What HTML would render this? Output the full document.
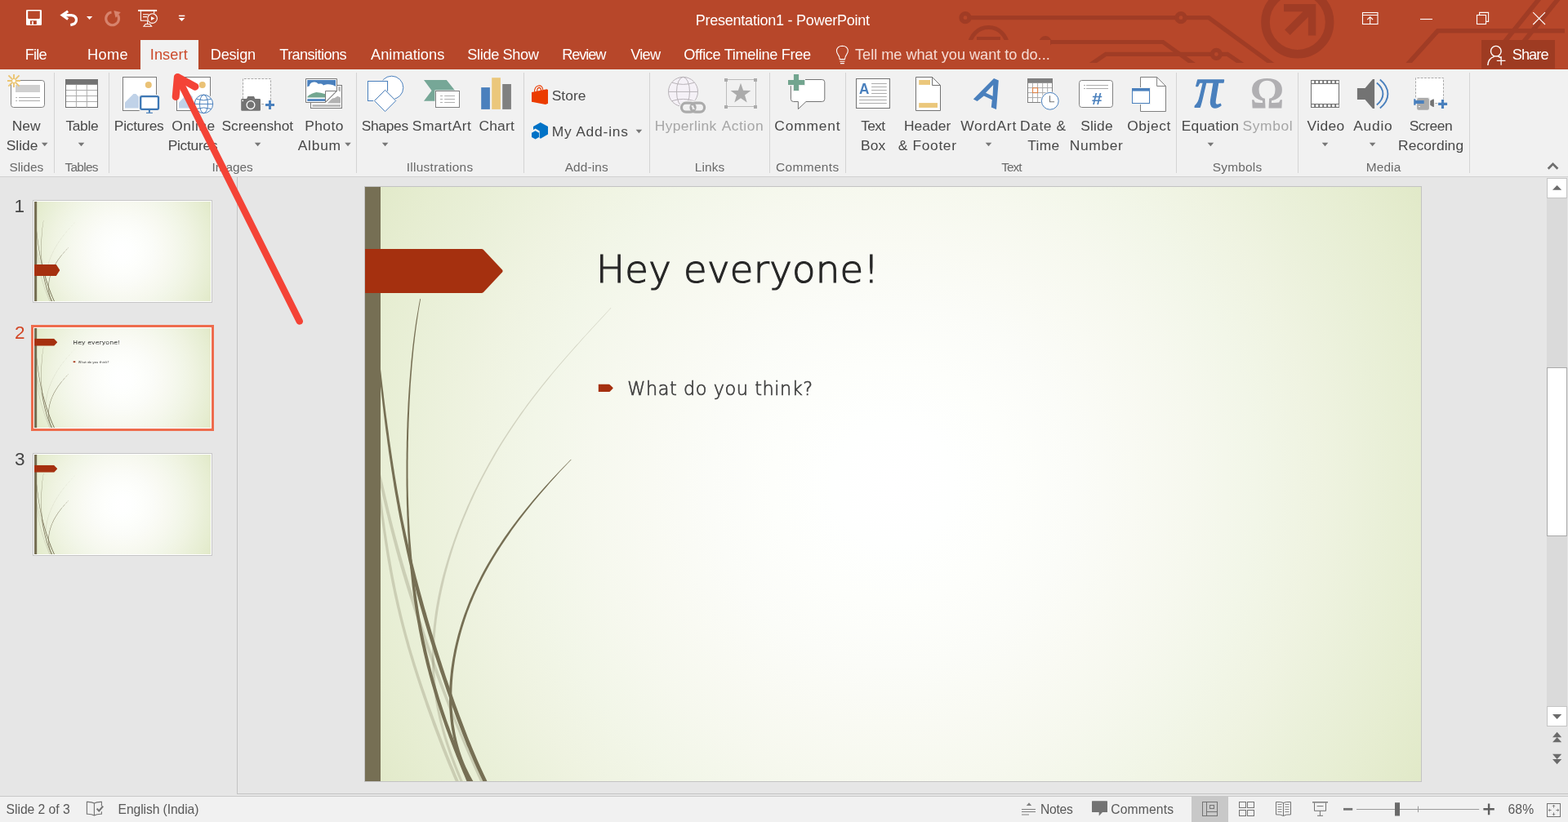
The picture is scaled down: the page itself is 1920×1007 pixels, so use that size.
<!DOCTYPE html>
<html lang="en">
<head>
<meta charset="utf-8">
<title>Presentation1 - PowerPoint</title>
<style>
*{box-sizing:border-box}
html,body{margin:0;padding:0}
body{width:1920px;height:1007px;overflow:hidden;background:#e6e6e6;font-family:"Liberation Sans",sans-serif}
#app{will-change:transform;position:relative;width:1920px;height:1007px;overflow:hidden;background:#e6e6e6}
.t{position:absolute;white-space:pre;line-height:1}
.a{position:absolute}
svg{position:absolute;overflow:visible}
#titlebar{left:0;top:0;width:1920px;height:85px;background:#b7472a;overflow:hidden}
#tab-insert{left:172px;top:49px;width:71px;height:36px;background:#f1f1f1}
#share{left:1814px;top:49px;width:90px;height:35px;background:#9e3b22}
#ribbon{left:0;top:85px;width:1920px;height:132px;background:#f1f1f1;border-bottom:1px solid #d2d2d2}
.sep{position:absolute;top:89px;width:1px;height:123px;background:#d4d4d4}
#thumbs{left:0;top:217px;width:290px;height:756px;background:#e6e6e6}
#split{left:290px;top:217px;width:1px;height:756px;background:#c3c3c3}
#editor{left:291px;top:217px;width:1629px;height:756px;background:#e6e6e6}
#statusbar{left:0;top:975px;width:1920px;height:32px;background:#f1f1f1;border-top:1px solid #c8c8c8}
.slidebg{background:radial-gradient(circle farthest-corner at 50% 50%,#ffffff 0%,#fefffe 10%,#fdfefb 20%,#fbfcf8 30%,#f9faf3 40%,#f6f8ee 50%,#f2f6e8 60%,#eff3e1 70%,#eaf0d9 80%,#e6edd1 90%,#e1e9c8 100%)}
#slide{left:447px;top:229px;width:1293px;height:728px;overflow:hidden;box-shadow:0 0 0 1px #c3c3c3}
.cg1{-webkit-text-stroke:1.15px #262626}
.cg2{-webkit-text-stroke:.65px #404040}
.thumb{position:absolute;overflow:hidden}
</style>
</head>
<body>
<div id="app">
<header id="titlebar" class="a">
<svg id="titlebar-art" width="1920" height="77" style="left:0;top:0;overflow:hidden" viewBox="0 0 1920 77" fill="none" stroke="#a03c25" stroke-width="5.2">
<circle cx="1182" cy="21.7" r="5"/>
<path d="M1188 21.7H1440.5M1451.5 21.7H1480L1560 80"/>
<circle cx="1446" cy="21.7" r="5"/>
<circle cx="1280" cy="51.5" r="5"/>
<path d="M1286 51.5H1424L1465 81"/>
<path d="M1334 80 1354 66.4H1483.5M1495.4 66.4H1503L1523 80"/>
<circle cx="1489.4" cy="66.4" r="5"/>
<path d="M1187.4 56.5A23 23 0 0 1 1233.4 56.5M1196 47.5h29"/>
<circle cx="1588.8" cy="27" r="39.3" stroke-width="10.6"/>
<path d="M1572 9.6h34.6V43.5M1606 10.2 1576.4 39.8" stroke-width="9.4"/>
<path d="M1721.6 81 1760.4 37.8H1916M1840.1 54 1885.9-3M1863.4 54 1909.3-3" stroke-width="5.6"/>
</svg>
<div id="tellme" class="a" style="left:1010px;top:49px;width:276px;height:36px;background:#b7472a"></div>

</header>
<nav id="tabs">
<div id="tab-insert" class="a"></div>
<div id="share" class="a"></div>
<span class="t" style="left:851.7px;top:16px;font-size:18px;letter-spacing:-0.23px;color:#ffffff">Presentation1 - PowerPoint</span>
<span class="t" style="left:30.7px;top:58px;font-size:18.2px;letter-spacing:-0.83px;color:#ffffff">File</span>
<span class="t" style="left:107px;top:58px;font-size:18.2px;letter-spacing:0.4px;color:#ffffff">Home</span>
<span class="t" style="left:183.8px;top:58px;font-size:18.2px;letter-spacing:0.08px;color:#cc4a2b">Insert</span>
<span class="t" style="left:257.8px;top:58px;font-size:18.2px;letter-spacing:-0.26px;color:#ffffff">Design</span>
<span class="t" style="left:342.3px;top:58px;font-size:18.2px;letter-spacing:-0.6px;color:#ffffff">Transitions</span>
<span class="t" style="left:454px;top:58px;font-size:18.2px;letter-spacing:0.03px;color:#ffffff">Animations</span>
<span class="t" style="left:572.3px;top:58px;font-size:18.2px;letter-spacing:-0.37px;color:#ffffff">Slide Show</span>
<span class="t" style="left:688.3px;top:58px;font-size:18.2px;letter-spacing:-1.12px;color:#ffffff">Review</span>
<span class="t" style="left:772.3px;top:58px;font-size:18.2px;letter-spacing:-0.77px;color:#ffffff">View</span>
<span class="t" style="left:837.3px;top:58px;font-size:18.2px;letter-spacing:-0.35px;color:#ffffff">Office Timeline Free</span>
<span class="t" style="left:1047px;top:58px;font-size:18.2px;letter-spacing:-0.03px;color:#f6dcd4">Tell me what you want to do...</span>
<span class="t" style="left:1851.7px;top:58px;font-size:18.2px;letter-spacing:-0.93px;color:#ffffff">Share</span>
<svg id="top-icons" width="1920" height="85" style="left:0;top:0" viewBox="0 0 1920 85" fill="none" stroke="#fff">
<!-- save -->
<g id="qat-save" stroke="none">
<path d="M33.3 12h16.4q1.3 0 1.3 1.3v16.4q0 1.3-1.3 1.3H33.3q-1.3 0-1.3-1.3V13.3q0-1.3 1.3-1.3z" fill="#fff"/>
<path d="M34.2 13.4h14.6v8.8l-.9.8H35.1l-.9-.8z" fill="#b7472a"/>
<rect x="37" y="25.3" width="7.8" height="4.5" fill="#b23c1e"/>
<rect x="38.9" y="26.2" width="2" height="3.6" fill="#fff"/>
</g>
<!-- undo -->
<g id="qat-undo">
<path d="M83.2 13.7 76.2 18.6 83.2 23.5" stroke-width="3.2" stroke-linejoin="miter"/>
<path d="M77.5 18.6H87.2q6.3.6 6.3 6 0 5-7.2 6" stroke-width="3.2"/>
<path d="M106 20h7.2L109.6 24.1z" fill="#fff" stroke="none"/>
</g>
<!-- redo (disabled) -->
<g id="qat-redo" stroke="#d7836d">
<path d="M136.5 15A7.9 7.9 0 1 0 144.3 18.6" stroke-width="3.1"/>
<path d="M139.4 12.9 147.8 15.1 141.6 21.7z" fill="#d7836d" stroke="none"/>
</g>
<!-- slideshow from beginning -->
<g id="qat-show">
<path d="M169.1 12.9h23" stroke-width="2"/>
<path d="M172.4 14v11.3h8.8M188.7 14v2.4" stroke-width="1.1"/>
<path d="M175 17.7h7M175 20.6h5" stroke-width="1.1"/>
<circle cx="186.6" cy="22.6" r="5.8" fill="#b7472a" stroke-width="1.1"/>
<path d="M185 20.3v4.7l4.5-2.4z" fill="#fff" stroke="none"/>
<path d="M180.6 26v3.6M176 32.2h9.6l-2.2-2.7h-5.2z" stroke-width="1.1"/>
</g>
<!-- customize -->
<g id="qat-custom">
<path d="M218.9 19.4h7.4" stroke-width="1.5"/>
<path d="M218.7 22h7.7l-3.85 4z" fill="#fff" stroke="none"/>
</g>
<!-- lightbulb -->
<g id="bulb" stroke-width="1.1">
<path d="M1028.3 72.6q-.2-3.2-2.2-6-2-3-1.6-5.4 1-4.8 6.9-5 5.9.2 6.9 5 .4 2.4-1.6 5.4-2 2.8-2.2 6z"/>
<path d="M1028.4 75.2h6M1029 77.6h4.8"/>
</g>
<!-- window controls -->
<g id="winctl" stroke-width="1.1">
<rect x="1668.5" y="15.5" width="18.5" height="14"/>
<path d="M1668.5 18.5h18.5M1677.7 29.4v-8.5M1674.3 24 1677.7 20.7 1681.1 24"/>
<path d="M1739 23.5h15"/>
<rect x="1808.5" y="18.5" width="11" height="11"/>
<path d="M1811.6 18.4v-3h11v11h-3"/>
<path d="M1877.2 15.2 1892 30M1892 15.2 1877.2 30"/>
</g>
<!-- share -->
<g id="share-ic" stroke-width="1.4">
<circle cx="1831.8" cy="62.7" r="6.3"/>
<path d="M1821.8 80q.4-8.6 8-10.6M1834 69q2.4.6 4 2"/>
<path d="M1832.8 74.4h10.6M1838.1 69.1v10.6" stroke-width="1.3"/>
</g>
</svg>

</nav>
<section id="ribbon" class="a"></section>
<section id="ribbon-content">
<i class="sep" style="left:66px"></i><i class="sep" style="left:133px"></i><i class="sep" style="left:436px"></i><i class="sep" style="left:641px"></i><i class="sep" style="left:795px"></i><i class="sep" style="left:942px"></i><i class="sep" style="left:1035px"></i><i class="sep" style="left:1440px"></i><i class="sep" style="left:1589px"></i><i class="sep" style="left:1799px"></i>

<svg id="ribbon-icons" width="1920" height="132" style="left:0;top:85px" viewBox="0 85 1920 132" fill="none">
<defs>
<path id="dd" d="M0 0h7.6L3.8 4.4z" fill="#777"/>
<g id="picframe">
<rect x=".5" y=".5" width="41" height="41" fill="#fff" stroke="#7a7a7a"/>
<circle cx="31.8" cy="9.9" r="4" fill="#eac276"/>
<path d="M3 38.6V31.4L13.4 21h3l3.4 3.4v14.2z" fill="#c0d2e8"/>
</g>
</defs>
<!-- New Slide -->
<g id="ic-newslide">
<rect x="13.5" y="98.5" width="41" height="33" rx="3.2" fill="#fff" stroke="#808080"/>
<rect x="19" y="104" width="30" height="9" fill="#d0d0d0"/>
<path d="M19.2 119.5h1.9m1.9 0h26M19.2 123.5h1.9m1.9 0h26" stroke="#ababab"/>
<circle cx="17" cy="99" r="4.6" fill="#f1f1f1"/>
<path d="M17 91v16M9 99h16M10.4 92.4l13.2 13.2M23.6 92.4 10.4 105.6" stroke="#ebc572" stroke-width="1.9"/>
<circle cx="17" cy="99" r="1.9" fill="#fff"/>
</g>
<!-- Table -->
<g id="ic-table">
<rect x="80.5" y="97.5" width="39" height="34" fill="#fff" stroke="#6e6e6e"/>
<rect x="80" y="97" width="40" height="6.8" fill="#737373"/>
<path d="M93.4 104v27.5M106.4 104v27.5M81 110.5h38M81 117.5h38M81 124.5h38" stroke="#acacac"/>
</g>
<!-- Pictures -->
<g id="ic-pictures">
<use href="#picframe" x="150" y="94"/>
<rect x="170" y="116" width="26" height="20" rx="2" fill="#f1f1f1"/>
<rect x="172.2" y="118.1" width="21.8" height="15.7" rx="1.6" fill="#fff" stroke="#3e78b5" stroke-width="2.3"/>
<path d="M182.9 134.6v3.2" stroke="#3e78b5" stroke-width="2"/><path d="M179 138.3h7.9" stroke="#3e78b5" stroke-width="1.1"/>
</g>
<!-- Online Pictures -->
<g id="ic-online">
<use href="#picframe" x="216" y="94"/>
<circle cx="249.5" cy="127.4" r="12.6" fill="#f1f1f1"/>
<circle cx="249.5" cy="127.4" r="11.2" fill="#fff" stroke="#4a80bd"/>
<ellipse cx="249.5" cy="127.4" rx="5" ry="11.2" stroke="#4a80bd"/>
<path d="M238.3 127.4h22.4M240.5 121.4q9 3 18 0M240.5 133.4q9-3 18 0" stroke="#4a80bd"/>
</g>
<!-- Screenshot -->
<g id="ic-screenshot">
<rect x="297" y="96" width="35" height="31.5" fill="#fff"/><path d="M297.5 121V96.5h34v26.5" stroke="#ababab" stroke-dasharray="3 1.3"/>
<path d="M296.4 121h5.6l1.4-3h7.6l1.4 3h5.4q1.2 0 1.2 1.2v12.4q0 1.2-1.2 1.2h-21.4q-1.2 0-1.2-1.2v-12.4q0-1.2 1.2-1.2z" fill="#737373"/>
<circle cx="307" cy="128.6" r="4.9" stroke="#fff" stroke-width="1.3"/>
<rect x="296.5" y="122.6" width="1.5" height="1.5" fill="#fff"/>
<path d="M320.2 127.5h2.8" stroke="#ababab"/>
<path d="M325 128.5h11M330.5 123v11" stroke="#4a80bd" stroke-width="3"/>
</g>
<!-- Photo Album -->
<g id="ic-album">
<rect x="380.5" y="104.5" width="38" height="28" fill="#fff" stroke="#7a7a7a"/>
<rect x="382.5" y="128.2" width="34.5" height="2.6" fill="#b3b3b3"/>
<path d="M400.6 126.6H417v-7l-3.6-1.8-3.6 2.2-2.8.4zM414.3 106.3H417v6.3l-2.7-1.6z" fill="#b3b3b3"/>
<path d="M374.5 96.5h38v15.2L398.6 125.5H374.5z" fill="#fff" stroke="#7a7a7a"/>
<path d="M376.3 98.1H411V106q-2-1.6-4-2-3.4-1-6.4-.7-2.6.2-4.6 1.1-1.3-2.1-3.2-2-1.6 0-3.1.4-2-2.4-4.7-2.3-2.2.2-4 1.1-2 1.4-2.25 3.9-1.4.2-2.55 1z" fill="#4a80bd"/>
<path d="M376.3 119.6v-1.2q5.6-4.6 11-5.4 5.6.6 11 2.3v4.3z" fill="#74a791"/>
<rect x="376.3" y="121.2" width="22" height="2.7" fill="#4a80bd"/>
<path d="M398.5 111.5h13.6L398.5 125.1z" fill="#fff" stroke="#7a7a7a"/>
</g>
<!-- Shapes -->
<g id="ic-shapes">
<circle cx="479.6" cy="107.4" r="14.2" fill="#fff" stroke="#4a80bd"/>
<rect x="449.3" y="98.3" width="26.4" height="26" fill="#f1f1f1"/>
<rect x="450.5" y="99.5" width="24" height="24" fill="#fff" stroke="#4a80bd"/>
<path d="M471.6 108.7 486.4 123.5 471.6 138.3 456.8 123.5z" fill="#f1f1f1"/>
<path d="M471.6 110.4 484.7 123.5 471.6 136.6 458.5 123.5z" fill="#fff" stroke="#4a80bd"/>
</g>
<!-- SmartArt -->
<g id="ic-smartart">
<path d="M519 98h27.8l10.4 13-10.4 12.7H519l9.6-12.7z" fill="#76a797"/>
<rect x="532.4" y="110.4" width="31.4" height="22" fill="#f1f1f1"/>
<rect x="533.5" y="111.5" width="29" height="20" fill="#fff" stroke="#808080"/>
<path d="M539 117.5h3m2.2 0h12.8M539 121.5h3m2.2 0h12.8M539 125.5h3m2.2 0h12.8" stroke="#b0b0b0"/>
</g>
<!-- Chart -->
<g id="ic-chart">
<rect x="589.2" y="107.1" width="10.7" height="26.8" fill="#4a80bd"/>
<rect x="602.2" y="95.2" width="10.7" height="38.7" fill="#ebc77b"/>
<rect x="615.2" y="103" width="10.7" height="30.9" fill="#808080"/>
</g>
<!-- Store -->
<g id="ic-store">
<path d="M654.6 112.6q-.3-6.4 4.8-7.6 4.6-.8 5.4 5.2M657.6 112.2q0-4.4 2.4-4.8 2.2-.2 2.6 3.6" stroke="#eb3c00" stroke-width="1.1"/>
<path d="M651 113.1 669.4 109.3 671 110V126.8L668 128 651 124.8z" fill="#eb3c00"/>
</g>
<!-- My Add-ins -->
<g id="ic-addins">
<path d="M661.8 149.9 671 155V164.6L662 169.7 660.7 169V160.4L655.6 157.5 653 159V154.9z" fill="#0072c6"/>
<path d="M655.6 160.2 660 162.7V168L655.6 170.6 651 168V162.7z" fill="#0072c6"/>
</g>
<!-- Hyperlink (disabled) -->
<g id="ic-hyperlink">
<circle cx="836.5" cy="112.4" r="18" fill="#f5f1f7" stroke="#b8b3b8"/>
<ellipse cx="836.5" cy="112.4" rx="8" ry="18" stroke="#b8b3b8"/>
<path d="M818.5 112.4h36M823 101.2q13.5 4.4 27 0M823 123.6q13.5-4.4 27 0" stroke="#b8b3b8"/>
<rect x="834.5" y="126.2" width="16.6" height="10.9" rx="5.4" fill="#f1f1f1" stroke="#f1f1f1" stroke-width="5.8"/>
<rect x="846" y="126.2" width="16.6" height="10.9" rx="5.4" fill="#f1f1f1" stroke="#f1f1f1" stroke-width="5.8"/>
<rect x="834.5" y="126.2" width="16.6" height="10.9" rx="5.4" stroke="#ababab" stroke-width="3.2"/>
<rect x="846" y="126.2" width="16.6" height="10.9" rx="5.4" stroke="#ababab" stroke-width="3.2"/>
<path d="M846.6 129.4 850.6 133.8" stroke="#f1f1f1" stroke-width="1.2"/>
</g>
<!-- Action (disabled) -->
<g id="ic-action">
<rect x="889.5" y="97.5" width="36" height="33" stroke="#bcbcbc"/>
<path d="M887 96h4v4h-4zM923 96h4v4h-4zM887 129h4v4h-4zM923 129h4v4h-4z" fill="#ababab"/>
<path d="M907 101.8 910.1 110.8 919.4 110.9 912 116.6 914.7 125.5 907 120.2 899.3 125.5 902 116.6 894.6 110.9 903.9 110.8z" fill="#ababab"/>
</g>
<!-- Comment -->
<g id="ic-comment">
<path d="M971.6 97.5h35q3.2 0 3.2 3.2v20.6q0 3.2-3.2 3.2H987L977.4 133.6V124.5h-5.8q-3.2 0-3.2-3.2V100.7q0-3.2 3.2-3.2z" fill="#fff" stroke="#737373"/>
<path d="M964 96.8h22v8.4h-22zM970.8 90h8.4v22h-8.4z" fill="#f1f1f1"/>
<path d="M965 101h20.2M975 91v20" stroke="#72a58f" stroke-width="6.2"/>
</g>
<!-- Text Box -->
<g id="ic-textbox">
<rect x="1048.5" y="96.5" width="41" height="36" fill="#fff" stroke="#737373"/>
<path d="M1067.1 102.5h18.7M1067.1 106.5h18.7M1067.1 110.5h18.7M1067.1 114.5h18.7M1052 118.5h33.8M1052 122.5h33.8M1052 126.5h33.8" stroke="#ababab"/>
<text x="1058.2" y="114.8" font-family="Liberation Sans, sans-serif" font-weight="bold" font-size="18.4" text-anchor="middle" fill="#4a80bd" textLength="12.4" lengthAdjust="spacingAndGlyphs">A</text>
</g>
<!-- Header & Footer -->
<g id="ic-header">
<path d="M1121.5 94.5h20l10 10v31h-30z" fill="#fff" stroke="#737373"/>
<path d="M1141.5 94.6v9.9h9.9" stroke="#737373"/>
<rect x="1125.2" y="98" width="13.8" height="5.9" fill="#ebc77b"/>
<rect x="1125.2" y="126.1" width="22.8" height="5.8" fill="#ebc77b"/>
</g>
<!-- WordArt -->
<g id="ic-wordart">
<path d="M1217 95.9 1222.8 98.4 1220 134.1 1213.8 131.6 1214.8 122.2 1204.8 117.6 1196.6 124 1191.8 121.6zM1216.2 104 1207 113.8 1215.6 117.8z" fill="#4a80bd" fill-rule="evenodd"/>
</g>
<!-- Date & Time -->
<g id="ic-date">
<rect x="1258.5" y="96.5" width="30" height="29" fill="#fff" stroke="#808080"/>
<rect x="1258" y="96" width="31" height="5.8" fill="#808080"/>
<path d="M1264.5 102v23M1270.6 102v23M1276.7 102v23M1282.7 102v23M1259 107.6h29M1259 113.6h29M1259 119.6h29" stroke="#ababab"/>
<rect x="1264.6" y="107.8" width="6" height="5.8" fill="#fff" stroke="#e07b39"/>
<circle cx="1285.8" cy="123.8" r="11.6" fill="#f1f1f1"/>
<circle cx="1285.8" cy="123.8" r="10.4" fill="#fff" stroke="#4a80bd"/>
<path d="M1285.5 117.2v7.5h5.6" stroke="#737373" stroke-width="1.1"/>
</g>
<!-- Slide Number -->
<g id="ic-slidenum">
<rect x="1321.5" y="98.5" width="41" height="33" rx="3.2" fill="#fff" stroke="#808080"/>
<path d="M1327 104.5h1.9m1.2 0h26.9M1327 108.5h1.9m1.2 0h26.9" stroke="#ababab"/>
<text x="1343.4" y="127.6" font-family="Liberation Sans, sans-serif" font-weight="bold" font-size="21" text-anchor="middle" fill="#4a80bd" textLength="12.6" lengthAdjust="spacingAndGlyphs">#</text>
</g>
<!-- Object -->
<g id="ic-object">
<path d="M1396.5 94.5h20.2l10.8 11v31h-31z" fill="#fff" stroke="#808080"/>
<path d="M1416.6 94.6v10.9h10.8" stroke="#808080"/>
<rect x="1385" y="107" width="24" height="21" fill="#f1f1f1"/>
<rect x="1386.5" y="108.5" width="21" height="18" fill="#fff" stroke="#4a80bd"/>
<rect x="1386" y="108" width="22" height="3.6" fill="#4a80bd"/>
</g>
<!-- Equation -->
<g id="ic-equation">
<text x="1479.9" y="131.2" font-family="Liberation Serif, serif" font-style="italic" font-size="72" text-anchor="middle" fill="#4a80bd" stroke="#4a80bd" stroke-width="1.4" stroke-linejoin="round" textLength="34.2" lengthAdjust="spacingAndGlyphs">π</text>
</g>
<!-- Symbol (disabled) -->
<g id="ic-symbol">
<text x="1551.5" y="131.8" font-family="Liberation Serif, serif" font-weight="bold" font-size="54.5" text-anchor="middle" fill="#b0afb2" textLength="41.5" lengthAdjust="spacingAndGlyphs">Ω</text>
</g>
<!-- Video -->
<g id="ic-video">
<rect x="1605.5" y="98.5" width="34" height="33" fill="#fff" stroke="#737373"/>
<path d="M1605 100.5h35M1605 129.5h35" stroke="#737373" stroke-width="5"/>
<path d="M1606.2 100.5h33M1606.2 129.5h33" stroke="#fff" stroke-width="2.8" stroke-dasharray="3 2"/>
</g>
<!-- Audio -->
<g id="ic-audio">
<path d="M1661.9 108.1h9.6l9.4-11.2h2.2v36.2h-2.2l-9.4-11.2h-9.6z" fill="#737373"/>
<path d="M1685.8 101.6q7.6 6 7.6 13.4t-7.6 13.4M1689.8 97.4q9.6 8 9.6 17.6t-9.6 17.6" stroke="#4a80bd" stroke-width="1.9"/>
</g>
<!-- Screen Recording -->
<g id="ic-screenrec">
<rect x="1733" y="95" width="35" height="31.5" fill="#fff"/><path d="M1733.5 119.5V95.5h34v26" stroke="#ababab" stroke-dasharray="3 1.3"/>
<rect x="1734" y="119" width="17" height="16.6" rx="2" fill="#f1f1f1"/>
<rect x="1735.1" y="119.9" width="14.8" height="14.8" rx="2" fill="#ababab"/>
<path d="M1731.2 121.2h2.3v1.8h10.2v4.1h-10.2v1.6h-2.3z" fill="#4a80bd"/>
<path d="M1737 130.6h2" stroke="#fff"/>
<path d="M1751.2 123.6 1754.8 121.4h1.1v9.6h-1.1l-3.6-2.2z" fill="#737373"/>
<path d="M1757.2 126.5h3" stroke="#ababab"/>
<path d="M1761.1 127.4h11M1766.5 121.9v11" stroke="#4a80bd" stroke-width="3.1"/>
</g>
<!-- dropdown arrows -->
<g id="dropdowns">
<use href="#dd" x="50.9" y="174.8"/><use href="#dd" x="95.7" y="174.8"/><use href="#dd" x="311.8" y="174.8"/><use href="#dd" x="422.2" y="174.8"/><use href="#dd" x="467.8" y="174.8"/><use href="#dd" x="778.6" y="158.8"/><use href="#dd" x="1206.7" y="174.8"/><use href="#dd" x="1478.6" y="174.8"/><use href="#dd" x="1618.7" y="174.8"/><use href="#dd" x="1676.8" y="174.8"/>
</g>
<path id="collapse" d="M1895.7 206.7 1901.55 200.8 1907.4 206.7" stroke="#6e6e6e" stroke-width="2.7"/>

</svg>

<span class="t" style="left:14.8px;top:146px;font-size:17.4px;letter-spacing:-0.05px;color:#484848">New</span>
<span class="t" style="left:7.7px;top:170px;font-size:17.4px;letter-spacing:0.02px;color:#484848">Slide</span>
<span class="t" style="left:80.5px;top:146px;font-size:17.4px;letter-spacing:-0.38px;color:#484848">Table</span>
<span class="t" style="left:139.8px;top:146px;font-size:17.4px;letter-spacing:-0.26px;color:#484848">Pictures</span>
<span class="t" style="left:210.3px;top:146px;font-size:17.4px;letter-spacing:0.54px;color:#484848">Online</span>
<span class="t" style="left:205.7px;top:170px;font-size:17.4px;letter-spacing:-0.27px;color:#484848">Pictures</span>
<span class="t" style="left:271.5px;top:146px;font-size:17.4px;letter-spacing:-0.03px;color:#484848">Screenshot</span>
<span class="t" style="left:373.2px;top:146px;font-size:17.4px;letter-spacing:0.45px;color:#484848">Photo</span>
<span class="t" style="left:364.7px;top:170px;font-size:17.4px;letter-spacing:0.78px;color:#484848">Album</span>
<span class="t" style="left:442.7px;top:146px;font-size:17.4px;letter-spacing:-0.3px;color:#484848">Shapes</span>
<span class="t" style="left:504.8px;top:146px;font-size:17.4px;letter-spacing:0.49px;color:#484848">SmartArt</span>
<span class="t" style="left:586.5px;top:146px;font-size:17.4px;letter-spacing:0.18px;color:#484848">Chart</span>
<span class="t" style="left:675.7px;top:109px;font-size:17.4px;letter-spacing:0.07px;color:#484848">Store</span>
<span class="t" style="left:675.7px;top:153px;font-size:17.4px;letter-spacing:0.81px;color:#484848">My Add-ins</span>
<span class="t" style="left:801.8px;top:146px;font-size:17.4px;letter-spacing:0.36px;color:#a6a6a6">Hyperlink</span>
<span class="t" style="left:883.7px;top:146px;font-size:17.4px;letter-spacing:0.52px;color:#a6a6a6">Action</span>
<span class="t" style="left:948.3px;top:146px;font-size:17.4px;letter-spacing:0.83px;color:#484848">Comment</span>
<span class="t" style="left:1054.2px;top:146px;font-size:17.4px;letter-spacing:-0.67px;color:#484848">Text</span>
<span class="t" style="left:1054px;top:170px;font-size:17.4px;letter-spacing:0.15px;color:#484848">Box</span>
<span class="t" style="left:1107px;top:146px;font-size:17.4px;letter-spacing:0.04px;color:#484848">Header</span>
<span class="t" style="left:1099.8px;top:170px;font-size:17.4px;letter-spacing:0.64px;color:#484848">&amp; Footer</span>
<span class="t" style="left:1176.2px;top:146px;font-size:17.4px;letter-spacing:0.77px;color:#484848">WordArt</span>
<span class="t" style="left:1249px;top:146px;font-size:17.4px;letter-spacing:0.6px;color:#484848">Date &amp;</span>
<span class="t" style="left:1258.3px;top:170px;font-size:17.4px;letter-spacing:0.3px;color:#484848">Time</span>
<span class="t" style="left:1323.2px;top:146px;font-size:17.4px;letter-spacing:0.2px;color:#484848">Slide</span>
<span class="t" style="left:1309.8px;top:170px;font-size:17.4px;letter-spacing:0.64px;color:#484848">Number</span>
<span class="t" style="left:1380.3px;top:146px;font-size:17.4px;letter-spacing:0.54px;color:#484848">Object</span>
<span class="t" style="left:1446.8px;top:146px;font-size:17.4px;letter-spacing:0.21px;color:#484848">Equation</span>
<span class="t" style="left:1521.5px;top:146px;font-size:17.4px;letter-spacing:0.64px;color:#a6a6a6">Symbol</span>
<span class="t" style="left:1600.5px;top:146px;font-size:17.4px;letter-spacing:0.38px;color:#484848">Video</span>
<span class="t" style="left:1657.2px;top:146px;font-size:17.4px;letter-spacing:0.75px;color:#484848">Audio</span>
<span class="t" style="left:1725.7px;top:146px;font-size:17.4px;letter-spacing:-0.44px;color:#484848">Screen</span>
<span class="t" style="left:1712px;top:170px;font-size:17.4px;letter-spacing:0.1px;color:#484848">Recording</span>
<span class="t" style="left:11.5px;top:197px;font-size:15.4px;letter-spacing:-0.06px;color:#696969">Slides</span>
<span class="t" style="left:79.5px;top:197px;font-size:15.4px;letter-spacing:-0.7px;color:#696969">Tables</span>
<span class="t" style="left:259.5px;top:197px;font-size:15.4px;letter-spacing:-0.06px;color:#696969">Images</span>
<span class="t" style="left:497.7px;top:197px;font-size:15.4px;letter-spacing:0.3px;color:#696969">Illustrations</span>
<span class="t" style="left:691.7px;top:197px;font-size:15.4px;letter-spacing:0.13px;color:#696969">Add-ins</span>
<span class="t" style="left:850.7px;top:197px;font-size:15.4px;letter-spacing:0.15px;color:#696969">Links</span>
<span class="t" style="left:950px;top:197px;font-size:15.4px;letter-spacing:0.39px;color:#696969">Comments</span>
<span class="t" style="left:1226.2px;top:197px;font-size:15.4px;letter-spacing:-0.97px;color:#696969">Text</span>
<span class="t" style="left:1484.8px;top:197px;font-size:15.4px;letter-spacing:0.23px;color:#696969">Symbols</span>
<span class="t" style="left:1672.8px;top:197px;font-size:15.4px;letter-spacing:0.12px;color:#696969">Media</span>
</section>
<aside id="thumbs" class="a"></aside>
<div id="split" class="a"></div>
<main id="editor" class="a"></main>
<section id="thumb-list">
<div class="thumb slidebg" id="thumb1" style="left:42px;top:247px;width:216px;height:122px;box-shadow:0 0 0 1px #fff,0 0 0 2px #c6c6c6">
<svg width="216" height="122" style="left:0;top:0" viewBox="0 0 216 122"><use href="#wisp" x="0" y="0" width="216" height="122"/><use href="#tag" x="0" y="77" width="31.4" height="14"/></svg>
</div>
<div class="a" id="thumb2-sel" style="left:38px;top:398px;width:224px;height:130px;background:#fff;border:3px solid #ee6c4d"></div>
<div class="thumb slidebg" id="thumb2" style="left:42px;top:402px;width:216px;height:122px">
<svg width="216" height="122" style="left:0;top:0" viewBox="0 0 216 122"><use href="#wisp" x="0" y="0" width="216" height="122"/><use href="#tag" x="0" y="12.8" width="28.2" height="9"/><rect x="47.7" y="40.4" width="2.6" height="1.7" fill="#a5300f"/></svg>
<div class="a" style="left:0;top:0;width:1293px;height:728px;transform:scale(.16705);transform-origin:0 0">
<span class="t cg1" style="left:283px;top:78px;font-size:46.6px;letter-spacing:0.25px;color:#262626;font-family:'DejaVu Sans', 'Liberation Sans', sans-serif;font-weight:200">Hey everyone!</span>
<span class="t cg2" style="left:321.3px;top:236px;font-size:22.4px;letter-spacing:0.55px;color:#404040;font-family:'DejaVu Sans', 'Liberation Sans', sans-serif;font-weight:200">What do you think?</span>
</div>
</div>
<div class="thumb slidebg" id="thumb3" style="left:42px;top:557px;width:216px;height:122px;box-shadow:0 0 0 1px #fff,0 0 0 2px #c6c6c6">
<svg width="216" height="122" style="left:0;top:0" viewBox="0 0 216 122"><use href="#wisp" x="0" y="0" width="216" height="122"/><use href="#tag" x="0" y="12.8" width="28.2" height="9"/></svg>
</div>
<span class="t" style="left:17.6px;top:242px;font-size:22.5px;letter-spacing:0px;color:#444444">1</span>
<span class="t" style="left:17.9px;top:397px;font-size:22.5px;letter-spacing:0px;color:#d24726">2</span>
<span class="t" style="left:17.9px;top:552px;font-size:22.5px;letter-spacing:0px;color:#444444">3</span>
</section>

<article id="slide" class="a slidebg">
<svg width="1293" height="728" style="left:0;top:0" viewBox="0 0 1293 728">
<defs>
<symbol id="wisp" viewBox="0 0 1293 728" preserveAspectRatio="none">
<g fill="#766f54" fill-opacity=".26">
<path d="M14.8 361.1L15.2 364.9L15.7 370.2L16.3 375.5L16.8 380.4L17.4 385.2L17.9 390L18.5 394.8L19.1 399.6L19.7 404.4L20.4 409.2L21 414L21.7 418.8L22.4 423.6L23.1 428.4L23.8 433.2L24.5 438L25.3 442.8L26 447.6L26.8 452.4L27.6 457.2L28.5 462L29.3 466.8L30.2 471.6L31.1 476.4L32 481.2L32.9 486L33.9 490.8L34.9 495.6L35.9 500.4L37 505.2L38 510L39.1 514.8L40.3 519.6L41.4 524.4L42.6 529.2L43.8 534L45 538.8L46.3 543.6L47.6 548.4L48.9 553.2L50.2 558L51.6 562.9L53 567.7L54.4 572.5L55.8 577.3L57.3 582.1L58.7 586.9L60.3 591.7L61.8 596.5L63.3 601.3L64.9 606.1L66.5 610.9L68.1 615.7L69.7 620.5L71.3 625.3L73 630.1L74.6 634.9L76.3 639.7L78 644.5L79.7 649.3L81.5 654.1L83.2 658.9L85 663.7L86.8 668.5L88.6 673.3L90.4 678.1L92.3 682.9L94.1 687.7L96 692.5L97.9 697.3L99.8 702.1L101.8 706.9L103.8 711.8L105.8 716.6L107.8 721.4L110.1 726.7L112.5 732L114.1 735.8L117.6 734.2L115.9 730.5L113.6 725.2L111.3 719.9L109.3 715.1L107.3 710.3L105.3 705.5L103.4 700.7L101.4 695.9L99.6 691.2L97.7 686.4L95.8 681.6L94 676.8L92.2 672L90.4 667.2L88.6 662.4L86.8 657.6L85 652.8L83.3 648L81.6 643.3L79.8 638.5L78.1 633.7L76.4 628.9L74.7 624.1L73.1 619.3L71.4 614.6L69.8 609.8L68.2 605L66.6 600.2L65.1 595.4L63.5 590.6L62 585.8L60.5 581.1L59.1 576.3L57.6 571.5L56.2 566.7L54.8 561.9L53.5 557.1L52.1 552.3L50.8 547.6L49.6 542.8L48.3 538L47.1 533.2L45.9 528.4L44.7 523.6L43.6 518.8L42.4 514.1L41.4 509.3L40.3 504.5L39.3 499.7L38.2 494.9L37.2 490.1L36.3 485.3L35.3 480.5L34.4 475.8L33.5 471L32.7 466.2L31.8 461.4L31 456.6L30.1 451.8L29.3 447L28.5 442.3L27.8 437.5L27 432.7L26.3 427.9L25.5 423.1L24.8 418.3L24.2 413.5L23.5 408.7L22.8 403.9L22.2 399.2L21.5 394.4L20.9 389.6L20.3 384.8L19.7 380L19.2 375.2L18.6 369.9L18 364.6L17.6 360.9Z"/>
<path d="M15.2 351.4L16 355.1L17.2 360.4L18.4 365.6L19.5 370.4L20.6 375.1L21.7 379.9L22.8 384.6L23.9 389.4L25 394.1L26.1 398.9L27.3 403.6L28.4 408.3L29.6 413.1L30.8 417.8L32 422.6L33.2 427.3L34.4 432.1L35.7 436.8L36.9 441.6L38.2 446.4L39.5 451.1L40.8 455.9L42.2 460.6L43.5 465.4L44.9 470.1L46.3 474.9L47.7 479.6L49.1 484.4L50.6 489.1L52 493.8L53.5 498.6L55 503.3L56.5 508.1L58 512.8L59.5 517.6L61.1 522.3L62.7 527L64.2 531.8L65.8 536.5L67.4 541.2L69 546L70.6 550.7L72.2 555.5L73.8 560.2L75.4 564.9L77.1 569.7L78.7 574.4L80.4 579.2L82 583.9L83.7 588.7L85.4 593.4L87.1 598.2L88.9 602.9L90.6 607.6L92.4 612.4L94.2 617.1L96 621.8L97.8 626.6L99.7 631.3L101.5 636L103.4 640.8L105.3 645.5L107.2 650.2L109.2 655L111.1 659.7L113.1 664.5L115.1 669.2L117.1 674L119.1 678.7L121.1 683.4L123.2 688.2L125.2 692.9L127.3 697.7L129.4 702.4L131.5 707.2L133.6 711.9L135.8 716.7L137.9 721.4L140.3 726.7L142.6 731.9L144.3 735.6L147 734.4L145.4 730.7L143 725.4L140.6 720.2L138.5 715.4L136.4 710.7L134.3 705.9L132.2 701.2L130.1 696.5L128 691.7L125.9 687L123.9 682.3L121.8 677.5L119.8 672.8L117.8 668L115.9 663.3L113.9 658.6L112 653.8L110.1 649.1L108.3 644.3L106.4 639.6L104.6 634.8L102.8 630.1L101 625.3L99.3 620.6L97.5 615.9L95.8 611.1L94.1 606.4L92.4 601.6L90.7 596.9L89 592.1L87.3 587.4L85.6 582.7L84 577.9L82.3 573.2L80.7 568.5L79 563.7L77.4 559L75.8 554.2L74.2 549.5L72.7 544.8L71.1 540L69.6 535.3L68 530.5L66.5 525.8L65 521L63.5 516.3L62 511.6L60.5 506.8L59 502.1L57.5 497.3L56.1 492.6L54.6 487.9L53.2 483.1L51.8 478.4L50.3 473.7L48.9 468.9L47.5 464.2L46.1 459.5L44.8 454.7L43.4 450L42.1 445.3L40.8 440.5L39.5 435.8L38.2 431.1L37 426.4L35.7 421.6L34.5 416.9L33.3 412.2L32.1 407.4L31 402.7L29.8 398L28.7 393.2L27.6 388.5L26.5 383.8L25.4 379L24.3 374.3L23.2 369.5L22.1 364.8L20.8 359.5L19.5 354.3L18.6 350.6Z"/>
<path d="M300.9 148L297.5 151.7L292.6 157L287.7 162.3L283.3 167.1L278.9 171.8L274.5 176.6L270.1 181.4L265.8 186.1L261.5 190.9L257.2 195.6L252.9 200.4L248.7 205.2L244.5 209.9L240.4 214.7L236.3 219.5L232.3 224.2L228.3 229L224.3 233.7L220.4 238.5L216.6 243.3L212.8 248L209.1 252.8L205.4 257.6L201.8 262.3L198.2 267.1L194.7 271.9L191.2 276.6L187.8 281.4L184.5 286.2L181.2 290.9L178 295.7L174.9 300.5L171.8 305.2L168.7 310L165.7 314.8L162.8 319.5L159.9 324.3L157.1 329.1L154.4 333.9L151.7 338.6L149 343.4L146.4 348.2L143.9 352.9L141.4 357.7L138.9 362.5L136.6 367.3L134.2 372L131.9 376.8L129.7 381.6L127.5 386.4L125.4 391.1L123.3 395.9L121.3 400.7L119.3 405.4L117.3 410.2L115.5 415L113.6 419.8L111.8 424.5L110.1 429.3L108.4 434.1L106.7 438.9L105.1 443.6L103.5 448.4L102 453.2L100.5 457.9L99.1 462.7L97.7 467.5L96.4 472.3L95.1 477L93.9 481.8L92.7 486.6L91.6 491.4L90.6 496.2L89.6 500.9L88.7 505.7L87.8 510.5L87 515.3L86.2 520.1L85.5 524.9L84.9 529.7L84.3 534.5L83.8 539.2L83.3 544L82.9 548.8L82.6 553.6L82.3 558.4L82.1 563.2L81.9 568L81.8 572.8L81.8 577.6L81.9 582.4L82 587.2L82.2 591.9L82.4 596.7L82.8 601.5L83.2 606.3L83.6 611.1L84.2 615.9L84.8 620.7L85.5 625.5L86.2 630.3L87.1 635.1L88 639.9L89 644.7L90 649.5L91.1 654.2L92.3 659L93.6 663.8L94.9 668.6L96.3 673.4L97.8 678.2L99.3 683L100.9 687.8L102.5 692.6L104.2 697.4L106 702.1L107.8 706.9L109.7 711.7L111.6 716.5L113.5 721.3L115.8 726.6L118 731.9L119.6 735.6L122.5 734.4L120.9 730.7L118.6 725.4L116.4 720.1L114.5 715.3L112.5 710.6L110.7 705.8L108.9 701.1L107.1 696.3L105.4 691.6L103.8 686.8L102.2 682.1L100.7 677.3L99.2 672.6L97.8 667.8L96.5 663L95.2 658.3L94.1 653.5L92.9 648.8L91.9 644L90.9 639.3L90 634.5L89.2 629.8L88.5 625L87.8 620.3L87.2 615.6L86.6 610.8L86.2 606.1L85.8 601.3L85.4 596.6L85.2 591.8L85 587.1L84.9 582.3L84.8 577.6L84.8 572.8L84.9 568.1L85.1 563.3L85.3 558.6L85.5 553.8L85.9 549.1L86.3 544.3L86.7 539.6L87.3 534.8L87.8 530L88.5 525.3L89.2 520.5L89.9 515.8L90.8 511L91.6 506.3L92.5 501.5L93.5 496.8L94.5 492L95.6 487.3L96.7 482.5L97.8 477.7L99 473L100.3 468.2L101.6 463.4L102.9 458.7L104.3 453.9L105.8 449.1L107.3 444.3L108.8 439.6L110.4 434.8L112.1 430L113.8 425.3L115.5 420.5L117.4 415.7L119.2 411L121.1 406.2L123.1 401.4L125.1 396.7L127.1 391.9L129.2 387.1L131.4 382.4L133.6 377.6L135.8 372.8L138.1 368L140.5 363.3L142.9 358.5L145.4 353.7L147.9 349L150.5 344.2L153.1 339.4L155.8 334.7L158.5 329.9L161.3 325.1L164.1 320.3L167 315.6L170 310.8L173 306L176.1 301.3L179.2 296.5L182.4 291.7L185.6 286.9L188.9 282.2L192.3 277.4L195.7 272.6L199.2 267.8L202.7 263.1L206.3 258.3L210 253.5L213.7 248.7L217.4 244L221.3 239.2L225.1 234.4L229 229.6L233 224.8L237 220.1L241.1 215.3L245.2 210.5L249.3 205.7L253.5 200.9L257.8 196.2L262 191.4L266.3 186.6L270.6 181.8L275 177L279.3 172.3L283.7 167.5L288.1 162.7L293 157.4L297.9 152.1L301.3 148.4Z"/>
</g>
<g fill="#766f54">
<path d="M67.3 137.1L66.6 140.8L65.6 146.1L64.7 151.4L63.9 156.1L63.1 160.8L62.3 165.6L61.6 170.3L61 175.1L60.3 179.8L59.7 184.6L59.1 189.3L58.5 194.1L58 198.8L57.5 203.5L57 208.3L56.5 213L56.1 217.8L55.7 222.5L55.3 227.3L54.9 232L54.5 236.8L54.2 241.5L53.8 246.3L53.5 251L53.2 255.8L52.9 260.5L52.6 265.3L52.4 270L52.2 274.7L51.9 279.5L51.7 284.2L51.5 289L51.4 293.7L51.2 298.5L51.1 303.2L51 308L50.8 312.7L50.8 317.5L50.7 322.2L50.6 327L50.6 331.7L50.5 336.5L50.5 341.2L50.5 346L50.5 350.7L50.5 355.5L50.5 360.2L50.5 364.9L50.6 369.7L50.7 374.4L50.7 379.2L50.8 383.9L50.9 388.7L51.1 393.4L51.2 398.2L51.4 402.9L51.6 407.7L51.8 412.4L52 417.2L52.2 421.9L52.5 426.7L52.8 431.4L53.1 436.2L53.4 440.9L53.7 445.7L54 450.5L54.4 455.2L54.8 460L55.2 464.7L55.6 469.5L56.1 474.2L56.6 479L57.1 483.7L57.6 488.5L58.2 493.3L58.8 498L59.4 502.8L60.1 507.5L60.8 512.3L61.5 517L62.2 521.8L63 526.6L63.8 531.3L64.7 536.1L65.5 540.8L66.4 545.6L67.4 550.4L68.3 555.1L69.3 559.9L70.4 564.6L71.4 569.4L72.5 574.1L73.7 578.9L74.8 583.7L76 588.4L77.3 593.2L78.5 597.9L79.8 602.7L81.1 607.4L82.5 612.2L83.9 617L85.3 621.7L86.7 626.5L88.2 631.2L89.7 636L91.3 640.8L92.8 645.5L94.4 650.3L96.1 655L97.7 659.8L99.4 664.5L101.2 669.3L102.9 674.1L104.7 678.8L106.5 683.6L108.3 688.3L110.2 693.1L112 697.8L114 702.6L115.9 707.3L117.8 712.1L119.8 716.9L121.8 721.6L124 726.9L126.3 732.2L127.9 735.8L131.8 734.2L130.3 730.5L128 725.2L125.8 719.9L123.8 715.2L121.8 710.5L119.9 705.7L117.9 701L116 696.2L114.2 691.5L112.3 686.8L110.5 682L108.6 677.3L106.9 672.6L105.1 667.9L103.4 663.1L101.7 658.4L100 653.7L98.4 648.9L96.8 644.2L95.2 639.5L93.7 634.7L92.1 630L90.6 625.3L89.2 620.5L87.8 615.8L86.4 611.1L85 606.4L83.7 601.6L82.4 596.9L81.1 592.2L79.9 587.4L78.7 582.7L77.6 578L76.4 573.2L75.3 568.5L74.3 563.8L73.2 559L72.2 554.3L71.3 549.6L70.3 544.8L69.4 540.1L68.5 535.4L67.6 530.7L66.8 525.9L66 521.2L65.2 516.5L64.5 511.7L63.7 507L63 502.3L62.4 497.5L61.7 492.8L61.1 488.1L60.5 483.3L59.9 478.6L59.4 473.9L58.8 469.1L58.3 464.4L57.8 459.7L57.3 454.9L56.9 450.2L56.5 445.5L56.1 440.7L55.7 436L55.3 431.3L55 426.5L54.7 421.8L54.5 417.1L54.2 412.3L54 407.6L53.7 402.8L53.6 398.1L53.4 393.4L53.2 388.6L53.1 383.9L52.9 379.1L52.8 374.4L52.7 369.7L52.6 364.9L52.6 360.2L52.5 355.4L52.5 350.7L52.5 346L52.5 341.2L52.5 336.5L52.6 331.7L52.6 327L52.7 322.2L52.8 317.5L52.8 312.8L53 308L53.1 303.3L53.2 298.5L53.4 293.8L53.5 289.1L53.7 284.3L53.9 279.6L54.1 274.8L54.3 270.1L54.5 265.3L54.7 260.6L55 255.9L55.3 251.1L55.5 246.4L55.8 241.6L56.2 236.9L56.5 232.2L56.9 227.4L57.3 222.7L57.6 217.9L58.1 213.2L58.5 208.4L59 203.7L59.4 199L59.9 194.2L60.5 189.5L61 184.7L61.6 180L62.2 175.2L62.8 170.5L63.5 165.8L64.2 161L64.9 156.3L65.6 151.5L66.5 146.2L67.4 141L68.1 137.3Z"/>
<path d="M14.1 196.1L14.4 199.8L14.9 205L15.4 210.3L15.9 215L16.4 219.8L16.9 224.5L17.4 229.2L17.9 234L18.4 238.7L18.9 243.4L19.5 248.2L20 252.9L20.5 257.6L21.1 262.3L21.6 267.1L22.2 271.8L22.7 276.5L23.3 281.3L23.9 286L24.5 290.7L25.1 295.5L25.7 300.2L26.4 304.9L27 309.7L27.6 314.4L28.3 319.1L28.9 323.9L29.6 328.6L30.3 333.3L31 338.1L31.7 342.8L32.4 347.5L33.2 352.3L33.9 357L34.7 361.7L35.4 366.5L36.2 371.2L37 375.9L37.9 380.7L38.7 385.4L39.6 390.1L40.4 394.9L41.3 399.6L42.2 404.4L43.1 409.1L44.1 413.8L45 418.6L46 423.3L46.9 428L47.9 432.8L49 437.5L50 442.3L51 447L52.1 451.8L53.1 456.5L54.2 461.2L55.3 466L56.5 470.7L57.6 475.5L58.8 480.2L60 485L61.2 489.7L62.4 494.4L63.6 499.2L64.9 503.9L66.2 508.7L67.5 513.4L68.8 518.1L70.2 522.9L71.5 527.6L72.9 532.3L74.3 537.1L75.7 541.8L77.1 546.5L78.6 551.3L80 556L81.5 560.7L83 565.5L84.4 570.2L85.9 574.9L87.5 579.7L89 584.4L90.5 589.1L92.1 593.9L93.7 598.6L95.3 603.3L96.9 608.1L98.5 612.8L100.1 617.5L101.8 622.3L103.4 627L105.1 631.8L106.8 636.5L108.5 641.2L110.2 646L111.9 650.7L113.7 655.4L115.5 660.2L117.3 664.9L119.1 669.7L121 674.4L122.8 679.1L124.7 683.9L126.7 688.6L128.7 693.4L130.7 698.1L132.7 702.8L134.8 707.6L136.9 712.3L139.1 717.1L141.3 721.8L143.8 727.1L146.4 732.4L148.2 736L152.4 734L150.6 730.3L148 725L145.5 719.8L143.3 715.1L141.2 710.4L139.1 705.7L137 701L135 696.3L133 691.5L131 686.8L129.1 682.1L127.2 677.4L125.3 672.7L123.5 668L121.7 663.2L119.9 658.5L118.1 653.8L116.3 649.1L114.6 644.4L112.8 639.6L111.1 634.9L109.4 630.2L107.8 625.5L106.1 620.8L104.5 616L102.8 611.3L101.2 606.6L99.6 601.9L98 597.2L96.5 592.4L94.9 587.7L93.4 583L91.8 578.3L90.3 573.5L88.8 568.8L87.3 564.1L85.9 559.4L84.4 554.7L83 549.9L81.5 545.2L80.1 540.5L78.7 535.8L77.3 531L75.9 526.3L74.6 521.6L73.2 516.9L71.9 512.2L70.6 507.4L69.3 502.7L68 498L66.7 493.3L65.4 488.6L64.2 483.9L62.9 479.2L61.7 474.4L60.5 469.7L59.3 465L58.1 460.3L57 455.6L55.8 450.9L54.7 446.2L53.6 441.5L52.5 436.7L51.5 432L50.4 427.3L49.4 422.6L48.4 417.9L47.4 413.2L46.4 408.4L45.5 403.7L44.6 399L43.7 394.3L42.8 389.6L41.9 384.8L41.1 380.1L40.2 375.4L39.4 370.7L38.6 365.9L37.8 361.2L37 356.5L36.2 351.8L35.5 347.1L34.7 342.3L34 337.6L33.3 332.9L32.6 328.2L31.9 323.4L31.2 318.7L30.5 314L29.8 309.3L29.2 304.6L28.6 299.8L27.9 295.1L27.3 290.4L26.7 285.7L26 280.9L25.4 276.2L24.8 271.5L24.2 266.8L23.6 262L23 257.3L22.5 252.6L21.9 247.9L21.3 243.1L20.8 238.4L20.2 233.7L19.7 229L19.1 224.2L18.6 219.5L18.1 214.8L17.5 210.1L17 204.8L16.4 199.6L16 195.9Z"/>
<path d="M252.1 333.8L248.5 337.5L243.3 342.8L238.2 348L233.7 352.7L229.2 357.5L224.9 362.2L220.5 366.9L216.3 371.7L212.1 376.4L208 381.2L204 385.9L200.1 390.7L196.2 395.4L192.4 400.2L188.6 405L185 409.7L181.4 414.5L177.9 419.3L174.5 424L171.1 428.8L167.9 433.6L164.7 438.4L161.6 443.1L158.6 447.9L155.7 452.7L152.8 457.5L150 462.3L147.3 467L144.7 471.8L142.2 476.6L139.8 481.4L137.4 486.2L135.1 491L132.9 495.8L130.8 500.6L128.7 505.3L126.8 510.1L124.9 514.9L123.1 519.7L121.3 524.5L119.7 529.3L118.1 534.1L116.6 538.9L115.2 543.7L113.8 548.5L112.6 553.2L111.4 558L110.3 562.8L109.2 567.6L108.3 572.4L107.4 577.2L106.6 582L105.9 586.8L105.2 591.6L104.7 596.4L104.2 601.2L103.8 606L103.5 610.8L103.3 615.6L103.1 620.4L103.1 625.2L103.1 630L103.2 634.8L103.4 639.6L103.7 644.4L104.1 649.2L104.6 654L105.2 658.9L105.9 663.7L106.8 668.5L107.7 673.3L108.7 678.1L109.9 682.9L111.2 687.8L112.7 692.6L114.2 697.4L116 702.2L117.8 707.1L119.9 711.9L122 716.7L124.4 721.6L127.3 726.9L130.4 732.2L132.6 736L135.9 734L133.7 730.3L130.6 725.1L127.8 719.8L125.5 715.1L123.3 710.4L121.3 705.7L119.4 700.9L117.7 696.2L116.1 691.5L114.7 686.8L113.4 682L112.2 677.3L111.1 672.6L110.2 667.8L109.4 663.1L108.6 658.4L108 653.6L107.5 648.9L107 644.2L106.7 639.4L106.5 634.7L106.3 629.9L106.3 625.2L106.3 620.5L106.4 615.7L106.6 611L106.9 606.2L107.3 601.5L107.7 596.7L108.3 592L108.9 587.2L109.6 582.5L110.3 577.7L111.2 573L112.1 568.2L113.1 563.5L114.2 558.7L115.4 553.9L116.6 549.2L117.9 544.4L119.3 539.7L120.8 534.9L122.3 530.2L123.9 525.4L125.6 520.6L127.4 515.9L129.2 511.1L131.2 506.4L133.2 501.6L135.3 496.8L137.5 492.1L139.7 487.3L142.1 482.6L144.5 477.8L147 473L149.6 468.3L152.2 463.5L155 458.8L157.8 454L160.7 449.2L163.7 444.5L166.7 439.7L169.9 434.9L173.1 430.2L176.4 425.4L179.7 420.6L183.2 415.8L186.7 411L190.3 406.2L194 401.5L197.7 396.7L201.5 391.9L205.4 387.1L209.4 382.3L213.4 377.5L217.5 372.7L221.7 367.9L225.9 363.1L230.2 358.3L234.5 353.5L238.9 348.6L243.9 343.3L248.9 337.9L252.5 334.2Z"/>
<rect x="0" y="0" width="19" height="728"/>
</g>
</symbol>
<symbol id="tag" viewBox="0 0 169 54" preserveAspectRatio="none"><path fill="#a5300f" d="M0 0H142.5Q144 0 145 1L168 25.6Q169.2 27 168 28.4L145 53Q144 54 142.5 54H0Z"/></symbol>
</defs>
<use href="#wisp" x="0" y="0" width="1293" height="728"/>
<use href="#tag" x="0" y="76" width="169" height="54"/>
<path fill="#a5300f" d="M285.8 241.8h12.6q1 0 1.6.6l3.4 3.4q.6.6 0 1.2l-3.4 3.4q-.6.6-1.6.6h-12.6z"/>
</svg>
<span class="t cg1" style="left:283px;top:78px;font-size:46.6px;letter-spacing:0.25px;color:#262626;font-family:'DejaVu Sans', 'Liberation Sans', sans-serif;font-weight:200">Hey everyone!</span>
<span class="t cg2" style="left:321.3px;top:236px;font-size:22.4px;letter-spacing:0.55px;color:#404040;font-family:'DejaVu Sans', 'Liberation Sans', sans-serif;font-weight:200">What do you think?</span>
</article>

<div id="vscroll">
<div class="a" style="left:1894px;top:218px;width:25px;height:647px;background:#dadada"></div>
<div class="a" style="left:1894px;top:218px;width:25px;height:25px;background:#fff;border:1px solid #c4c4c4"></div>
<div class="a" style="left:1894px;top:450px;width:25px;height:207px;background:#fff;border:1px solid #a9a9a9"></div>
<div class="a" style="left:1894px;top:865px;width:25px;height:25px;background:#fff;border:1px solid #c4c4c4"></div>
<svg width="26" height="730" style="left:1894px;top:217px" viewBox="1894 217 26 730" fill="#6b6b6b">
<path d="M1901 232.8h11.2L1906.6 226.9zM1901 875.1h11.2L1906.6 881.1zM1901 903.2h11.2L1906.6 896.8zM1901 909.3h11.2L1906.6 903.2zM1901 923.8h11.2L1906.6 930zM1901 930h11.2L1906.6 936.2z"/>
</svg>
</div>
<div id="editor-bottom" class="a" style="left:291px;top:972px;width:1629px;height:1px;background:#c3c3c3"></div>

<footer id="statusbar" class="a"></footer>
<div id="status-content">
<div id="view-normal" class="a" style="left:1459px;top:976px;width:45px;height:31px;background:#c8c8c8"></div>
<svg id="status-icons" width="1920" height="33" style="left:0;top:974px" viewBox="0 974 1920 33" fill="none" stroke="#737373">
<!-- spelling -->
<g id="st-spell" stroke-width="1.1">
<path d="M115.4 984v15M115.4 984q-3-1.8-9-1.6v14.8q6-.2 9 1.8M115.4 984q3-1.8 9-1.6v5M115.4 999q3-2 9-1.8v-3"/>
<path d="M118.6 990.6 121.2 993.4 126.2 987.6" stroke-width="2"/>
</g>
<!-- notes -->
<g id="st-notes" stroke="#808080">
<path d="M1251 991.5h17M1251 994.5h17M1251 998h9"/>
<path d="M1256.8 987h6.4l-3.2-3.8z" fill="#808080" stroke="none"/>
</g>
<!-- comments -->
<path id="st-comments" d="M1337.6 981.3h17.8q.6 0 .6.6v12.6q0 .6-.6.6h-5.4L1345.7 999.6V995.1h-8.1q-.6 0-.6-.6V981.9q0-.6.6-.6z" fill="#737373" stroke="none"/>
<!-- normal view -->
<g id="st-normal">
<rect x="1472.5" y="982.5" width="18" height="17"/>
<path d="M1477.5 982.5v17M1477.5 994.5h13"/>
<rect x="1481.5" y="986.5" width="5" height="4"/>
</g>
<!-- slide sorter -->
<g id="st-sorter">
<rect x="1517.5" y="982.5" width="8" height="7"/><rect x="1527.5" y="982.5" width="8" height="7"/><rect x="1517.5" y="992.5" width="8" height="7"/><rect x="1527.5" y="992.5" width="8" height="7"/>
</g>
<!-- reading view -->
<g id="st-reading">
<path d="M1571.5 983.5v16M1571.5 983.5q-3-1.4-9-1v15.4q6-.4 9 1.6M1571.5 983.5q3-1.4 9-1v15.4q-6-.4-9 1.6"/>
<path d="M1564.5 985.5h5M1564.5 988.5h5M1564.5 991.5h5M1564.5 994.5h5M1573.5 985.5h5M1573.5 988.5h5M1573.5 991.5h5M1573.5 994.5h5" stroke-width=".8"/>
</g>
<!-- slideshow -->
<g id="st-show">
<path d="M1607 982.8h19" stroke-width="1.4"/>
<path d="M1609.5 983.5v9.8h14v-9.8M1612.6 987.6h7.8M1616.4 993.3v5.7M1613 999.3h7"/>
</g>
<!-- zoom -->
<g id="st-zoom">
<path d="M1645 991.3h11.2" stroke-width="2.8"/>
<path d="M1661 991.5h150.2M1736.5 987.7v7.4" stroke="#9a9a9a"/>
<rect x="1708" y="983.2" width="6" height="16.3" fill="#6a6a6a" stroke="none"/>
<path d="M1816.4 991.2h13.4M1823.1 984.4v13.8" stroke-width="2.4" stroke="#5e5e5e"/>
</g>
<!-- fit -->
<g id="st-fit">
<rect x="1894.5" y="984.5" width="16" height="16"/>
<path d="M1902.5 986v3.6M1902.5 995.4v3.6M1896 992.5h3.6M1905.4 992.5h3.6M1901 987.8l1.5-1.6 1.5 1.6M1901 997.2l1.5 1.6 1.5-1.6M1897.8 991l-1.6 1.5 1.6 1.5M1907.2 991l1.6 1.5-1.6 1.5" stroke-width=".9"/>
</g>
</svg>

<span class="t" style="left:7.6px;top:984px;font-size:15.7px;letter-spacing:-0.04px;color:#595959">Slide 2 of 3</span>
<span class="t" style="left:144.6px;top:984px;font-size:15.7px;letter-spacing:-0.1px;color:#595959">English (India)</span>
<span class="t" style="left:1273.9px;top:984px;font-size:15.7px;letter-spacing:-0.23px;color:#595959">Notes</span>
<span class="t" style="left:1360.3px;top:984px;font-size:15.7px;letter-spacing:0.13px;color:#595959">Comments</span>
<span class="t" style="left:1846.4px;top:984px;font-size:15.7px;letter-spacing:0.25px;color:#595959">68%</span>
</div>
<svg id="annotation" width="1920" height="1007" style="left:0;top:0;pointer-events:none" viewBox="0 0 1920 1007" fill="none" stroke="#f44336" stroke-linecap="round" stroke-linejoin="round">
<path d="M366.8 393.6 217.6 94.6" stroke-width="8.4"/>
<path d="M215.2 118.6 217.4 94.4 239 106.2" stroke-width="9"/>
</svg>

</div>
</body>
</html>
